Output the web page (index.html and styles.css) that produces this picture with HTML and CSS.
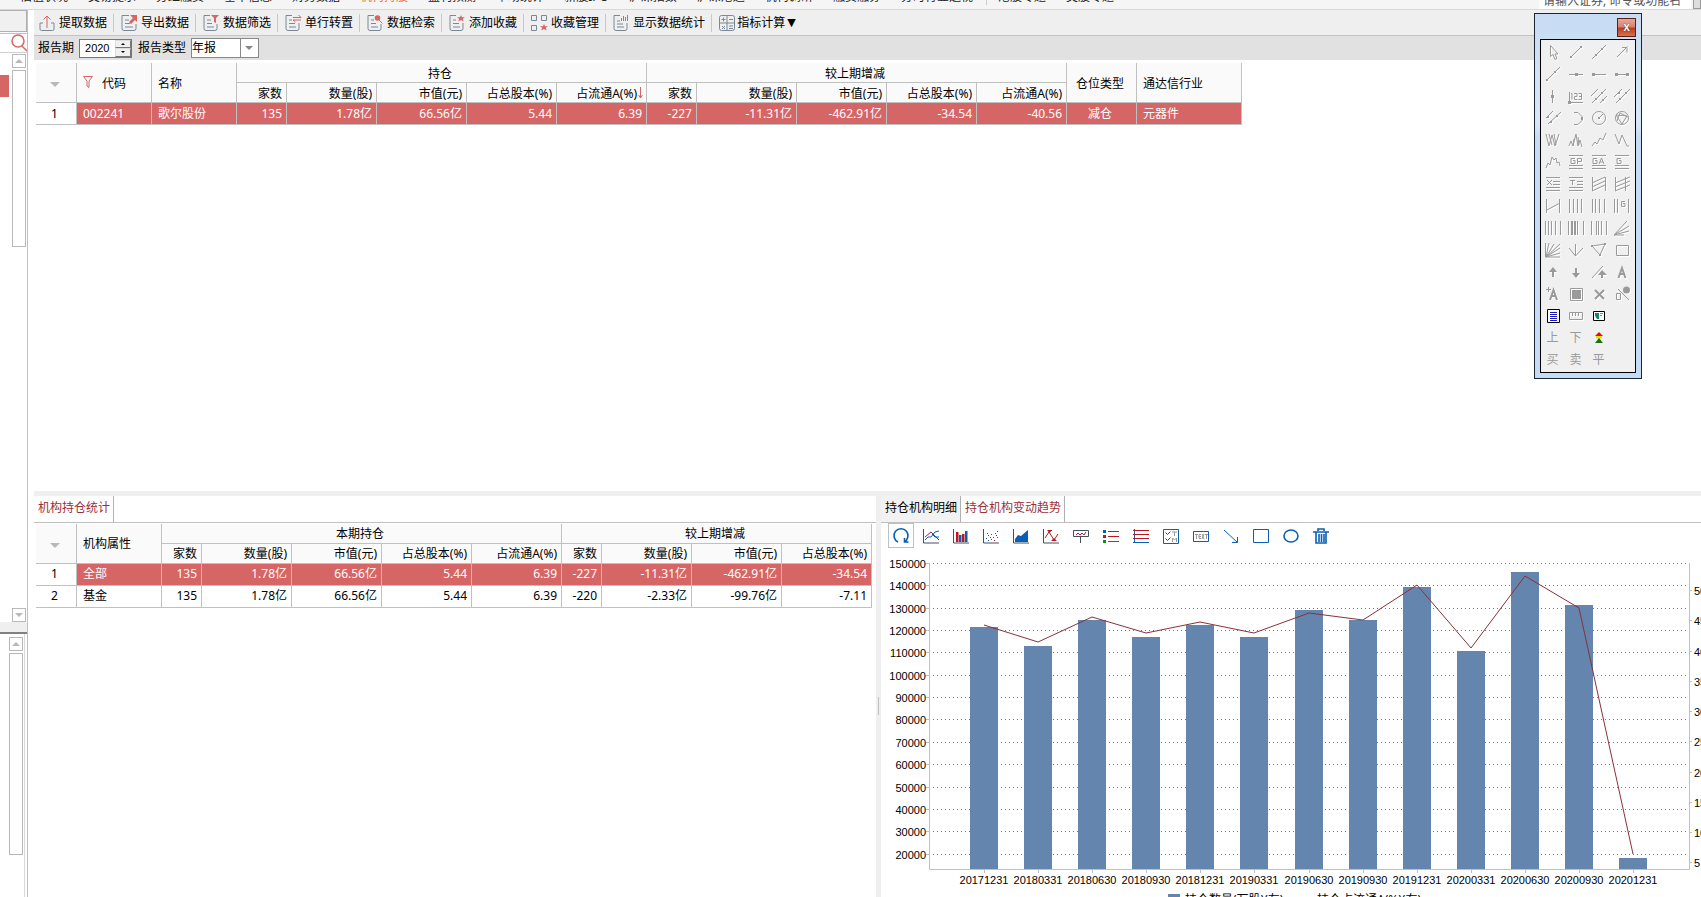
FILE: index.html
```html
<!DOCTYPE html>
<html lang="zh-CN">
<head>
    <meta charset="UTF-8">
    <meta name="viewport" content="width=device-width, initial-scale=1.0">
    <title>机构持股</title>
    <link rel="stylesheet" href="styles.css">
</head>
<body>

<header class="topbar">
    <nav class="topnav">
        <a href="#valuation">估值状况</a>
        <a href="#tips">交易提示</a>
        <a href="#finance">分红融资</a>
        <a href="#basic">基本信息</a>
        <a href="#data">财务数据</a>
        <a href="#holders" class="active">机构持股</a>
        <a href="#forecast">盈利预测</a>
        <a href="#market">市场统计</a>
        <a href="#ipo">新股IPO</a>
        <a href="#hkdata">沪深指数</a>
        <a href="#hkconnect">沪深港通</a>
        <a href="#research">机构调研</a>
        <a href="#margin">融资融券</a>
        <a href="#industry">分时行业透视</a>
        <span class="nav-sep"></span>
        <a href="#hk">港股专题</a>
        <a href="#us">美股专题</a>
    </nav>
    <input class="top-search" type="text" aria-label="搜索" placeholder="请输入证券, 命令或功能名">
    <button class="top-go" aria-label="查找"></button>
</header>

<div class="app">
    <aside class="side">
        <div class="side-head"></div>
        <div class="side-search">
            <svg width="16" height="18" viewBox="0 0 16 18"><circle cx="7" cy="7" r="6"/><path d="M11 12l5 5"/></svg>
        </div>
        <div class="side-list">
            <span class="side-mark"></span>
            <div class="scroll">
                <button class="scroll-btn up" aria-label="向上"></button>
                <div class="thumb"></div>
                <button class="scroll-btn down" aria-label="向下"></button>
            </div>
        </div>
        <div class="side-gap"></div>
        <div class="side-list second">
            <div class="scroll">
                <button class="scroll-btn up" aria-label="向上"></button>
                <div class="thumb tall"></div>
            </div>
        </div>
    </aside>

    <main class="main">
        <div class="toolbar">
            <button><svg class="ti" viewBox="0 0 16 16"><path d="M4 8H1v6q0 1.500 1.500 1.500h11q1.500 0 1.500-1.500V8h-3"/><path class="r" d="M8 13V1M4.500 4.500L8 1l3.500 3.500"/></svg>提取数据</button>
            <button><svg class="ti" viewBox="0 0 16 16"><path d="M8 .5H1v13q0 2 2 2h10q2 0 2-2V9M4 5h4M4 8.500h5M4 12h8"/><path class="rf" d="M9 0h7v7l-2-2-4 4-2-2 4-4z"/></svg>导出数据</button>
            <button><svg class="ti" viewBox="0 0 16 16"><path d="M7 .5H1v13q0 2 2 2h9q2 0 2-2V9M4 5h4M4 8.500h5M4 12h7"/><path class="rf" d="M8 0h8l-3 3v5l-2-1V3z"/></svg>数据筛选</button>
            <button><svg class="ti" viewBox="0 0 16 16"><path d="M7 .5H1v13q0 2 2 2h9q2 0 2-2V8M4 5h3M4 8.500h6M4 12h7"/><path class="r" d="M8 2.500h8M13.500 0L16 2.500M16 5H8l2.500 2"/></svg>单行转置</button>
            <button><svg class="ti" viewBox="0 0 16 16"><path d="M7 .5H1v13q0 2 2 2h9q2 0 2-2V9M4 5h3M4 8.500h5M4 12h7"/><circle class="rf" cx="10.500" cy="3" r="2.800"/><path class="r" d="M12 5l3.500 3.500"/></svg>数据检索</button>
            <button><svg class="ti" viewBox="0 0 16 16"><path d="M7 .5H1v13q0 2 2 2h9q2 0 2-2V8M4 5h3M4 8.500h6M4 12h7"/><path class="rf" d="M12 0l1 2.200h3l-2.200 1.600.9 2.800L12 5 9.300 6.600l.9-2.800L8 2.200h3z"/></svg>添加收藏</button>
            <button><svg class="ti" viewBox="0 0 16 16"><path d="M.5.5h5v5h-5zM10.500.5h5v5h-5zM.5 10.500h5v5h-5z"/><path class="rf" d="M13 9l1 2.200h3l-2.200 1.600.9 2.800L13 14l-2.700 1.600.9-2.800L9 11.200h3z"/></svg>收藏管理</button>
            <button><svg class="ti" viewBox="0 0 16 16"><path d="M7 .5H1v13q0 2 2 2h9q2 0 2-2V8M4 6h3M4 9h6M4 12h7"/><path class="r" d="M8.500 3v3M10.500 1v5M12.500 2v4M14.500 0v6"/></svg>显示数据统计</button>
            <button><svg class="ti" viewBox="0 0 16 16"><rect x=".5" y=".5" width="15" height="15" rx="2"/><path d="M8 1v15M1 8h15M3 11l3 3M6 11l-3 3M10 11h4M10 13.500h4"/><path class="r" d="M2.500 4.500h4M4.500 2.500v4M10 4.500h4"/></svg>指标计算<span class="caret">▼</span></button>
        </div>

        <div class="filters">
            <label for="year">报告期</label>
            <div class="spin">
                <input id="year" type="text" value="2020">
                <div class="spin-btns">
                    <button class="up" aria-label="增加"></button>
                    <button class="down" aria-label="减少"></button>
                </div>
            </div>
            <label for="kind">报告类型</label>
            <div class="combo">
                <select id="kind"><option>年报</option><option>中报</option></select>
            </div>
        </div>

        <section class="top-pane">
            <table class="grid wide">
                <colgroup>
                    <col class="w41"><col class="w75"><col class="w85"><col class="w50"><col class="w90"><col class="w90"><col class="w90"><col class="w90">
                    <col class="w50"><col class="w100"><col class="w90"><col class="w90"><col class="w90"><col class="w70"><col class="w105">
                </colgroup>
                <thead>
                    <tr>
                        <th rowspan="2" class="idx"><i class="tri"></i></th>
                        <th rowspan="2" class="l"><svg class="funnel" viewBox="0 0 10 12"><path d="M.5.5h9L6 5v6.500L4 10V5z"/></svg>代码</th>
                        <th rowspan="2" class="l">名称</th>
                        <th colspan="5" class="c">持仓</th>
                        <th colspan="5" class="c">较上期增减</th>
                        <th rowspan="2" class="c">仓位类型</th>
                        <th rowspan="2" class="l">通达信行业</th>
                    </tr>
                    <tr>
                        <th>家数</th><th>数量(股)</th><th>市值(元)</th><th>占总股本(%)</th>
                        <th class="sorted">占流通A(%)<svg class="sort" viewBox="0 0 5 12"><path d="M2.500 0v11M.5 8l2 3 2-3"/></svg></th>
                        <th>家数</th><th>数量(股)</th><th>市值(元)</th><th>占总股本(%)</th><th>占流通A(%)</th>
                    </tr>
                </thead>
                <tbody>
                    <tr class="sel">
                        <td class="idx">1</td><td class="l">002241</td><td class="l">歌尔股份</td>
                        <td>135</td><td>1.78亿</td><td>66.56亿</td><td>5.44</td><td>6.39</td>
                        <td>-227</td><td>-11.31亿</td><td>-462.91亿</td><td>-34.54</td><td>-40.56</td>
                        <td class="c">减仓</td><td class="l">元器件</td>
                    </tr>
                </tbody>
            </table>
        </section>

        <div class="hsplit"></div>

        <div class="bottom">
            <section class="stat-pane">
                <div class="tabs"><button class="tab on">机构持仓统计</button></div>
                <div class="stat-body">
                    <table class="grid narrow">
                        <colgroup>
                            <col class="w41"><col class="w85"><col class="w40"><col class="w90"><col class="w90"><col class="w90"><col class="w90">
                            <col class="w40"><col class="w90"><col class="w90"><col class="w90">
                        </colgroup>
                        <thead>
                            <tr>
                                <th rowspan="2" class="idx"><i class="tri"></i></th>
                                <th rowspan="2" class="l">机构属性</th>
                                <th colspan="5" class="c">本期持仓</th>
                                <th colspan="4" class="c">较上期增减</th>
                            </tr>
                            <tr>
                                <th>家数</th><th>数量(股)</th><th>市值(元)</th><th>占总股本(%)</th><th>占流通A(%)</th>
                                <th>家数</th><th>数量(股)</th><th>市值(元)</th><th>占总股本(%)</th>
                            </tr>
                        </thead>
                        <tbody>
                            <tr class="sel">
                                <td class="idx">1</td><td class="l">全部</td><td>135</td><td>1.78亿</td><td>66.56亿</td><td>5.44</td><td>6.39</td>
                                <td>-227</td><td>-11.31亿</td><td>-462.91亿</td><td>-34.54</td>
                            </tr>
                            <tr>
                                <td class="idx">2</td><td class="l">基金</td><td>135</td><td>1.78亿</td><td>66.56亿</td><td>5.44</td><td>6.39</td>
                                <td>-220</td><td>-2.33亿</td><td>-99.76亿</td><td>-7.11</td>
                            </tr>
                        </tbody>
                    </table>
                </div>
            </section>

            <div class="vsplit"></div>

            <section class="chart-pane">
                <div class="tabs">
                    <button class="tab off">持仓机构明细</button>
                    <button class="tab on">持仓机构变动趋势</button>
                </div>
                <div class="chart-tools">
                    <button class="boxed" aria-label="刷新"><svg viewBox="0 0 16 16"><path class="b2" d="M5 14A7 7 0 1 1 11 14M11.500 10v4h4"/></svg></button>
                    <button aria-label="折线图"><svg viewBox="0 0 16 16"><path class="k" d="M.5 1v14H16"/><path class="b" d="M2 12l3-3h3l4-5 4-1M9 6l3 3h4"/><path class="r" d="M2 9l6-5 3 3 5 5"/></svg></button>
                    <button aria-label="柱状图"><svg viewBox="0 0 16 16"><path class="k" d="M.5 1v14H16"/><path class="fr" d="M3 4h2.500v10H3zM9 6h2.500v8H9z"/><path class="fb" d="M6 7h2.500v7H6zM12 3h2.500v11H12z"/></svg></button>
                    <button aria-label="散点图"><svg viewBox="0 0 16 16"><path class="k" d="M.5 1v14H16"/><path class="fb" d="M3 10h1v1H3zM5 7h1v1H5zM8 6h1v1H8zM10 9h1v1h-1zM12 5h1v1h-1zM14 3h1v1h-1zM5 12h1v1H5zM14 9h1v1h-1zM8 11h1v1H8z"/><path class="fr" d="M4 5h1v1H4zM7 9h1v1H7zM11 12h1v1h-1zM13 7h1v1h-1z"/></svg></button>
                    <button aria-label="面积图"><svg viewBox="0 0 16 16"><path class="k" d="M.5 1v14H16"/><path class="fb" d="M2 14v-3l3-4 3 1 7-6v12z"/></svg></button>
                    <button aria-label="极值"><svg viewBox="0 0 16 16"><path class="k" d="M.5 1v14H16"/><path class="r" d="M2 10l4-6 5 8 4-6"/><path class="fr" d="M4 2h5L6.500 5zM8 13l3-3 3 3zM5 2h4v1H5z"/></svg></button>
                    <button aria-label="标注"><svg viewBox="0 0 16 16"><path class="k" d="M.5 2.500h15v6H.5zM7.500 9v6"/><path class="r" d="M3 7l2-2 2 2 2-2 2 2 2-3"/></svg></button>
                    <button aria-label="图例"><svg viewBox="0 0 16 16"><path class="fb" d="M0 2h3v3H0z"/><path class="fr" d="M0 7h3v3H0z"/><path class="fg" d="M0 12h3v3H0z"/><path class="b" d="M5 3.500h11"/><path class="r" d="M5 8.500h11"/><path class="g" d="M5 13.500h11"/></svg></button>
                    <button aria-label="横线"><svg viewBox="0 0 16 16"><path class="b" d="M1.500 1v14M0 14.500h16"/><path class="r" d="M0 2.500h16M0 6.500h16M0 10.500h16"/></svg></button>
                    <button aria-label="选项"><svg viewBox="0 0 16 16"><path class="b" d="M.5 1.500h15v14H.5z"/><path class="r" d="M2.500 4.500l2 2 3-3M2.500 10.500l2 2 3-3"/><path class="m" d="M9 4h5M11.500 4v4M9.500 14v-4l2 2 2-2v4"/></svg></button>
                    <button aria-label="文本"><svg viewBox="0 0 16 16"><path class="b" d="M.5 3.500h15v10H.5z"/><path class="m" d="M2 6.500h3M3.500 6v5M8 6.500H6v4h2M6 8.500h2M9 6l2 5M11 6l-2 5M12 6.500h3M13.500 6v5"/></svg></button>
                    <button aria-label="箭头"><svg viewBox="0 0 16 16"><path class="b" d="M1 2l13.500 12.500M14.500 9v5.500H9"/></svg></button>
                    <button aria-label="矩形"><svg viewBox="0 0 16 16"><path class="b" d="M.5 1.500h15v13H.5z"/></svg></button>
                    <button aria-label="圆"><svg viewBox="0 0 16 16"><ellipse class="b2" cx="8" cy="8" rx="7" ry="6"/></svg></button>
                    <button aria-label="删除"><svg viewBox="0 0 16 16"><path class="b2" d="M0 4h16M5 3V1h6v2M3 4v11h10V4"/><path class="b2" d="M6 6v8M8.500 6v8M11 6v8"/></svg></button>
                </div>
                <div class="chart"><svg id="chart" role="img" aria-label="持仓机构变动趋势"></svg></div>
            </section>
        </div>
    </main>
</div>

<!-- floating drawing tools -->
<div class="palette">
    <div class="palette-title"><button class="close" aria-label="关闭">x</button></div>
    <div class="palette-body">
        <button><svg viewBox="0 0 16 16"><path d="M5.500 1.500v11l2.500-2 2 5 2-1-2-4.500h3z"/></svg></button>
        <button><svg viewBox="0 0 16 16"><path d="M3 13L13 3"/><path class="f" d="M2 12h2v2H2zM12 2h2v2h-2z"/></svg></button>
        <button><svg viewBox="0 0 16 16"><path d="M1 15L15 1"/><path class="f" d="M4 10h2v2H4zM10 4h2v2h-2z"/></svg></button>
        <button><svg viewBox="0 0 16 16"><path d="M3 13L13.500 2.500M8 3.500h5v5"/></svg></button>

        <button><svg viewBox="0 0 16 16"><path d="M1 15L15 1"/><path class="f" d="M1 13h2v2H1zM9 5h2v2H9z"/></svg></button>
        <button><svg viewBox="0 0 16 16"><path d="M1 8.500h14"/><path class="f" d="M7 7h3v3H7z"/></svg></button>
        <button><svg viewBox="0 0 16 16"><path d="M1 8.500h14"/><path class="f" d="M1 7h3v3H1z"/></svg></button>
        <button><svg viewBox="0 0 16 16"><path d="M2 8.500h12"/><path class="f" d="M1 7h3v3H1zM12 7h3v3h-3z"/></svg></button>

        <button><svg viewBox="0 0 16 16"><path d="M7.500 2v13"/><path class="f" d="M6 7h3v3H6z"/></svg></button>
        <button><svg viewBox="0 0 16 16"><path d="M1.500 4v10M1 14.500h14M3 5.500h1v6M6 5.500h3v3H6.500v3H9.500M10.500 5.500h3v6h-3M11 8.500h2"/><path class="f" d="M0 13h3v3H0z"/></svg></button>
        <button><svg viewBox="0 0 16 16"><path d="M0 8l7-7M1 15L15 1M9 15l7-7"/><path class="f" d="M10 4h2v2h-2zM4 10h2v2H4zM11 11h2v2h-2z"/></svg></button>
        <button><svg viewBox="0 0 16 16"><path d="M0 9l8-8M2 15L16 1"/><path class="f" d="M4 4h2v2H4zM11 4h2v2h-2zM5 10h2v2H5z"/></svg></button>

        <button><svg viewBox="0 0 16 16"><path d="M1 8l7-7M3 14L16 2"/><path class="f" d="M2 6h2v2H2zM5 11h2v2H5zM11 5h2v2h-2z"/></svg></button>
        <button><svg viewBox="0 0 16 16"><path d="M6 2.500h4l4 4v4l-4 4H6"/><path class="f" d="M13 7h2v3h-2z"/></svg></button>
        <button><svg viewBox="0 0 16 16"><circle cx="8" cy="8" r="6.500"/><path d="M8 8l4-4"/><path class="f" d="M7 7h2v2H7z"/></svg></button>
        <button><svg viewBox="0 0 16 16"><circle cx="8" cy="8" r="6.500"/><path d="M2 5l11 1-5 8zM3 11l3-8 8 4"/></svg></button>

        <button><svg viewBox="0 0 16 16"><path d="M1 2l3 12L7 3l3 11 4-12M4 2l3 11M9 2l2 11"/></svg></button>
        <button><svg viewBox="0 0 16 16"><path d="M1 14l2-5 2 5 3-12 2 12 2-6 2 7M5 14l1-7M10 5l1 8"/></svg></button>
        <button><svg viewBox="0 0 16 16"><path d="M1 14l3-4 2 2 3-6 3 2 3-7"/></svg></button>
        <button><svg viewBox="0 0 16 16"><path d="M1 2l4 10 3-9 5 11h2"/></svg></button>

        <button><svg viewBox="0 0 16 16"><path d="M1 14l2-5 2 2 2-8 2 3 2-2 1 5 2-1 1 4"/></svg></button>
        <button><svg viewBox="0 0 16 16"><path d="M1 1.500h14M1 11.500h14M1 14.500h14M7 4.500H3v5h4v-3H5M9.500 10V4.500h4v3h-4"/></svg></button>
        <button><svg viewBox="0 0 16 16"><path d="M1 1.500h14M1 11.500h14M1 14.500h14M6 4.500H2v5h4v-3H4M8 10l2.500-6L13 10M9 8h3"/></svg></button>
        <button><svg viewBox="0 0 16 16"><path d="M1 1.500h14M1 11.500h14M1 14.500h14M7 4.500H3v5h4v-3H5"/></svg></button>

        <button><svg viewBox="0 0 16 16"><path d="M1 1.500h14M8 5.500h7M8 8.500h7M1 11.500h14M1 14.500h14M2 9l5-5M2 4l2 2M5 7l2 2"/></svg></button>
        <button><svg viewBox="0 0 16 16"><path d="M1 1.500h14M9 5.500h6M9 8.500h6M1 11.500h14M1 14.500h14M2 4.500h5M4.500 4v5"/></svg></button>
        <button><svg viewBox="0 0 16 16"><path d="M1.500 1v14M14.500 1v14M1 7l13-6M1 11l13-6M1 15l13-6"/></svg></button>
        <button><svg viewBox="0 0 16 16"><path d="M1.500 1v14M11.500 1v14M1 7l15-6M1 11l15-6M1 15l15-6"/></svg></button>

        <button><svg viewBox="0 0 16 16"><path d="M1.500 1v14M14.500 1v14M2 12l13-7"/></svg></button>
        <button><svg viewBox="0 0 16 16"><path d="M1.500 1v14M5.500 1v14M9.500 1v14M13.500 1v14"/></svg></button>
        <button><svg viewBox="0 0 16 16"><path d="M1.500 1v14M4.500 1v14M8.500 1v14M13.500 1v14"/></svg></button>
        <button><svg viewBox="0 0 16 16"><path d="M.5 1v14M3.500 1v14M14.500 1v14M11 3.500H7.500v5H11v-3H9"/></svg></button>

        <button><svg viewBox="0 0 16 16"><path d="M.5 1v14M3.500 1v14M6.500 1v14M10.500 1v14M15.500 1v14"/></svg></button>
        <button><svg viewBox="0 0 16 16"><path d="M.5 1v14M9.500 1v14M15.500 1v14"/><path class="f" d="M3 1h2v14H3zM6 1h2v14H6z"/></svg></button>
        <button><svg viewBox="0 0 16 16"><path d="M.5 1v14M5.500 1v14M7.500 1v14M10.500 1v14M15.500 1v14"/></svg></button>
        <button><svg viewBox="0 0 16 16"><path d="M0 15L13 1M0 15L15 6M0 15l15-4M0 15h10"/></svg></button>

        <button><svg viewBox="0 0 16 16"><path d="M.5 1v14H15M1 15L4 1M1 15L9 2M1 15L15 2M1 15l14-9M1 15l14-4"/></svg></button>
        <button><svg viewBox="0 0 16 16"><path d="M7.500 2v12M1 6l6.500 8L15 6"/></svg></button>
        <button><svg viewBox="0 0 16 16"><path d="M1 4l13-2-5 11z"/><path class="f" d="M0 3h2v2H0zM13 1h2v2h-2zM8 12h2v2H8z"/></svg></button>
        <button><svg viewBox="0 0 16 16"><path d="M2.500 3.500h12v10h-12z"/></svg></button>

        <button><svg viewBox="0 0 16 16"><path class="f" d="M8 3l4 5H9v5H7V8H4z"/></svg></button>
        <button><svg viewBox="0 0 16 16"><path class="f" d="M8 14l4-5H9V4H7v5H4z"/></svg></button>
        <button><svg viewBox="0 0 16 16"><path d="M1 14L12 2"/><path class="f" d="M11 6l5 5h-4v3h-2v-3H7z"/></svg></button>
        <button><svg viewBox="0 0 16 16"><path class="s2" d="M4.500 14l3.500-10 3.500 10M5 10h6"/></svg></button>

        <button><svg viewBox="0 0 16 16"><path class="s2" d="M5 14l3.500-10L12 14M6 10h5"/><path d="M1 3.500h5M3.500 1v5"/></svg></button>
        <button><svg viewBox="0 0 16 16"><path d="M2.500 2.500h12v12h-12z"/><path class="f" d="M4 4h9v9H4z"/></svg></button>
        <button><svg viewBox="0 0 16 16"><path class="s2" d="M4 4l9 9M13 4l-9 9"/></svg></button>
        <button><svg viewBox="0 0 16 16"><path d="M2.500 7.500h4v6h-4zM4 3l11 11"/><circle class="f" cx="12.500" cy="4" r="3.500"/></svg></button>

        <button><svg class="raw" viewBox="0 0 16 16"><path fill="#fff" stroke="#000" d="M2.500 1.500h12v13h-12z"/><path stroke="#1818c0" d="M5 4.500h7M5 6.500h7M5 8.500h7M5 10.500h7M5 12.500h7"/></svg></button>
        <button><svg viewBox="0 0 16 16"><path d="M1.500 4.500h13v7h-13zM4.500 5v3M7.500 5v3M10.500 5v3"/></svg></button>
        <button><svg class="raw" viewBox="0 0 16 16"><path fill="#fff" stroke="#000" d="M2.500 3.500h11v9h-11z"/><path fill="#16856a" d="M4 5h4v6H6L4 8z"/><path stroke="#888" d="M9 5.500h3M9 7.500h2"/></svg></button>
        <span></span>

        <button class="word">上</button>
        <button class="word">下</button>
        <button><svg class="raw" viewBox="0 0 16 16"><path fill="#e01010" d="M8 2l4 4H4z"/><path fill="#f0e000" d="M5 6h6v2l-3 1-3-1z"/><path fill="#187018" d="M8 8l4 5H4z"/></svg></button>
        <span></span>

        <button class="word">买</button>
        <button class="word">卖</button>
        <button class="word">平</button>
    </div>
</div>

<script src="script.js"></script>
</body>
</html>
```
FILE: styles.css
```css
* {
    box-sizing: border-box;
}
body {
    margin: 0;
    height: 100vh;
    display: flex;
    flex-direction: column;
    overflow: hidden;
    background-color: #fff;
    color: #000;
    font-family: "Noto Sans", "Noto Sans CJK SC", sans-serif;
    font-size: 12px;
    line-height: 16px;
}
button, input, select {
    font: inherit;
    color: inherit;
    margin: 0;
    padding: 0;
    border: 0;
    border-radius: 0;
    background: none;
}
svg {
    display: block;
    fill: none;
}

/* top menu, scrolled so only its lower edge shows */
.topbar {
    display: flex;
    align-items: flex-end;
    flex: none;
    height: 10px;
    overflow: hidden;
    background-color: #f5f5f5;
    border-bottom: 1px solid #d8d8d8;
}
.topnav {
    display: flex;
    flex: 1;
    gap: 20px;
    padding: 0 0 4px 20px;
}
.topnav a {
    color: #222;
    text-decoration: none;
    white-space: nowrap;
}
.topnav a.active {
    color: #f07040;
}
.nav-sep {
    width: 1px;
    margin: 0 -9px 0 -7px;
    background-color: #ccc;
}
.top-search {
    width: 152px;
    height: 18px;
    margin-right: 2px;
    padding-left: 4px;
    background-color: #fff;
}
.top-search::placeholder {
    color: #555;
}
.top-go {
    width: 8px;
    height: 20px;
    background-color: #ddd;
    border: 1px solid #999;
}

.app {
    display: flex;
    flex: 1;
    min-height: 0;
}

/* left strip */
.side {
    display: flex;
    flex-direction: column;
    flex: none;
    width: 28px;
    border-right: 1px solid #c0c0c0;
}
.side-head {
    height: 22px;
    background-color: #f0f0f0;
    border: 1px solid #b0b0b0;
    border-left: 0;
}
.side-search {
    display: flex;
    justify-content: flex-end;
    height: 20px;
    margin-top: 1px;
    border-top: 1px solid #c0c0c0;
    border-bottom: 1px solid #d0d0d0;
}
.side-search svg {
    stroke: #d66566;
    stroke-width: 1.5;
}
.side-list {
    display: flex;
    justify-content: space-between;
    flex: 569;
    padding: 1px 1px 0 0;
}
.side-mark {
    width: 9px;
    height: 22px;
    margin-top: 21px;
    background-color: #d66566;
}
.scroll {
    display: flex;
    flex-direction: column;
    width: 14px;
}
.scroll-btn {
    display: flex;
    align-items: center;
    justify-content: center;
    height: 14px;
    border: 1px solid #b8b8b8;
}
.scroll-btn::before, .tri::before {
    content: "";
    border: 4px solid transparent;
}
.scroll-btn.up::before {
    border-top: 0;
    border-bottom-color: #b8b8b8;
}
.scroll-btn.down {
    margin-top: auto;
}
.scroll-btn.down::before {
    border-bottom: 0;
    border-top-color: #b8b8b8;
}
.thumb {
    height: 177px;
    margin-top: 2px;
    border: 1px solid #b8b8b8;
}
.thumb.tall {
    height: 202px;
}
.side-gap {
    height: 12px;
    background-color: #efefef;
    border-bottom: 2px solid #808080;
}
.side-list.second {
    flex: 261;
    justify-content: flex-end;
    margin-right: 2px;
    padding: 3px 1px 0 0;
    border-right: 1px solid #d8d8d8;
}

.main {
    display: flex;
    flex-direction: column;
    flex: 1;
    min-width: 0;
    margin-left: 6px;
}
.toolbar {
    display: flex;
    align-items: center;
    flex: none;
    height: 26px;
    background-color: #efefef;
    border-bottom: 1px solid #c4c4c4;
}
.toolbar button {
    display: flex;
    align-items: center;
    gap: 4px;
    height: 18px;
    padding: 0 6px 0 7px;
    border-right: 1px solid #c8c8c8;
    white-space: nowrap;
}
.toolbar button:first-child {
    padding-left: 5px;
}
.toolbar button:last-child {
    gap: 2px;
    border-right: 0;
}
.caret {
    font-family: "DejaVu Sans", sans-serif;
    font-size: 11px;
}
.ti {
    width: 16px;
    height: 16px;
    stroke: #788898;
    overflow: visible;
}
.r {
    stroke: #d66566;
}
.rf {
    fill: #d66566;
    stroke: none;
}

.filters {
    display: flex;
    align-items: center;
    flex: none;
    gap: 6px;
    height: 24px;
    padding-left: 4px;
    background-color: #e1e1e1;
}
.spin {
    display: flex;
    width: 53px;
    height: 19px;
    margin-left: -1px;
    background-color: #fff;
    border: 1px solid #777;
}
.spin input {
    flex: 1;
    min-width: 0;
    padding-left: 5px;
    font-family: "Liberation Sans", sans-serif;
    font-size: 11px;
}
.spin-btns {
    display: flex;
    flex-direction: column;
    width: 16px;
}
.spin-btns button {
    display: flex;
    align-items: center;
    justify-content: center;
    flex: 1;
    background-color: #f0f0f0;
    border: 1px solid #777;
    border-top-color: #ddd;
    border-left-color: #ddd;
}
.spin-btns button::before {
    content: "";
    border: 2px solid transparent;
}
.spin-btns .up::before {
    border-top: 0;
    border-bottom-color: #000;
}
.spin-btns .down::before {
    border-bottom: 0;
    border-top-color: #000;
}
.combo {
    position: relative;
    width: 68px;
    height: 20px;
    margin-left: -1px;
    background-color: #fff;
    border: 1px solid #888;
}
.combo select {
    width: 100%;
    height: 18px;
    padding: 0 20px 0 0;
    appearance: none;
}
.combo::before {
    content: "";
    position: absolute;
    top: 0;
    bottom: 0;
    right: 17px;
    width: 1px;
    background-color: #888;
}
.combo::after {
    content: "";
    position: absolute;
    top: 7px;
    right: 5px;
    border: 4px solid transparent;
    border-top-color: #888;
    border-bottom: 0;
    pointer-events: none;
}

/* tables */
.grid {
    table-layout: fixed;
    border-spacing: 0;
}
.wide {
    width: 1206px;
}
.narrow {
    width: 836px;
}
.w40 { width: 40px; }
.w41 { width: 41px; }
.w50 { width: 50px; }
.w70 { width: 70px; }
.w75 { width: 75px; }
.w85 { width: 85px; }
.w90 { width: 90px; }
.w100 { width: 100px; }
.w105 { width: 105px; }
.grid th, .grid td {
    padding: 0 4px;
    border-right: 1px solid #c0c0c0;
    border-bottom: 1px solid #c0c0c0;
    text-align: right;
    font-weight: normal;
    white-space: nowrap;
}
.grid th {
    height: 20px;
    padding-top: 2px;
    background-color: #fafafa;
}
.grid td {
    height: 22px;
}
.grid .l {
    padding-left: 6px;
    text-align: left;
}
.grid .c, .grid .idx {
    padding-right: 7px;
    text-align: center;
}
.grid .sel td {
    background-color: #d66566;
    color: #fff;
}
.grid .sel .idx {
    background-color: #fff;
    color: #000;
}
.tri::before {
    display: inline-block;
    border-width: 5px;
    border-top-color: #b8b8b8;
    border-bottom: 0;
    vertical-align: middle;
}
.funnel {
    display: inline-block;
    width: 10px;
    height: 12px;
    margin-right: 9px;
    stroke: #d66566;
}
.grid .sorted {
    padding-right: 3px;
}
.sort {
    display: inline-block;
    width: 5px;
    height: 12px;
    margin-left: 1px;
    stroke: #d66566;
    vertical-align: -1px;
}

.top-pane {
    flex: 430;
    min-height: 0;
    padding: 3px 0 0 2px;
}
.hsplit {
    flex: none;
    height: 5px;
    background-color: #efefef;
}
.bottom {
    display: flex;
    flex: 403;
    min-height: 0;
}
.stat-pane {
    flex: 842;
    min-width: 0;
}
.stat-body {
    padding: 1px 0 0 2px;
}
.vsplit {
    display: flex;
    align-items: center;
    justify-content: center;
    width: 5px;
    padding-top: 20px;
    background-color: #efefef;
}
.vsplit::before {
    content: "";
    width: 1px;
    height: 18px;
    background-color: #c0c0c0;
}
.tabs {
    display: flex;
    flex: none;
    height: 27px;
    border-bottom: 1px solid #c0c0c0;
}
.tab {
    padding: 0 3px 2px 4px;
    border-right: 1px solid #b0b0b0;
    white-space: nowrap;
}
.tab.on {
    color: #9c2f38;
}
.tab.off {
    background-color: #f2f2f2;
}

.chart-pane {
    display: flex;
    flex-direction: column;
    flex: 820;
    min-width: 0;
}
.chart-tools {
    display: flex;
    align-items: center;
    gap: 4px;
    flex: none;
    height: 26px;
    padding-left: 7px;
}
.chart-tools button {
    display: flex;
    align-items: center;
    justify-content: center;
    width: 26px;
    height: 25px;
    border: 1px solid transparent;
}
.chart-tools .boxed {
    border-color: #c0c0c0;
}
.chart-tools svg {
    width: 16px;
    height: 16px;
    overflow: visible;
}
.chart-tools .k { stroke: #405060; }
.chart-tools .b { stroke: #0a5fb4; }
.chart-tools .b2 { stroke: #0a5fb4; stroke-width: 1.6; }
.chart-tools .r { stroke: #b81820; }
.chart-tools .g { stroke: #108a18; }
.chart-tools .m { stroke: #999; }
.chart-tools .fb { fill: #0a5fb4; }
.chart-tools .fr { fill: #b81820; }
.chart-tools .fg { fill: #108a18; }
.chart {
    flex: 1;
    min-height: 0;
    overflow: hidden;
}
.chart svg {
    width: 100%;
    height: 100%;
}
.chart text {
    fill: #000;
    font-family: "Liberation Sans", sans-serif;
    font-size: 11px;
}
.chart .legend {
    font-family: "Noto Sans", "Noto Sans CJK SC", sans-serif;
    font-size: 12px;
}
.chart .end { text-anchor: end; }
.chart .mid { text-anchor: middle; }
.chart .axis {
    stroke: #c0c0c0;
}
.chart .gridline {
    stroke: #777;
    stroke-dasharray: 1 3;
}
.chart .bar {
    fill: #6485ae;
}
.chart .trend {
    stroke: #8a3038;
}

/* drawing palette */
.palette {
    position: absolute;
    top: 13px;
    right: 59px;
    width: 108px;
    padding: 0 5px 5px;
    background-color: #c4dcf6;
    background-image: linear-gradient(#c6dcf2, #d8e8fa 30%, #c4dcf6 34%);
    border: 1px solid #1c2630;
}
.palette-title {
    display: flex;
    justify-content: flex-end;
    height: 25px;
    padding-top: 4px;
}
.close {
    width: 19px;
    height: 19px;
    color: #fff;
    font-family: "Liberation Sans", sans-serif;
    font-weight: bold;
    line-height: 15px;
    text-shadow: 0 0 1px #000;
    background-image: linear-gradient(#e8a898, #d88070 48%, #b83c20 52%, #d87050);
    border: 1px solid #5c2018;
}
.palette-body {
    display: grid;
    grid-template-columns: repeat(4, 1fr);
    grid-auto-rows: 22px;
    padding: 1px 2px 1px 0;
    background-color: #f0f0f0;
    border: 1px solid #000;
}
.palette-body button {
    display: flex;
    align-items: center;
    justify-content: center;
}
.palette-body svg {
    width: 16px;
    height: 16px;
    stroke: #9a9a9a;
    filter: drop-shadow(1px 1px 0 #fff);
}
.palette-body .f {
    fill: #9a9a9a;
    stroke: none;
}
.palette-body .s2 {
    stroke-width: 2;
}
.palette-body .raw {
    stroke: none;
    filter: none;
}
.word {
    color: #9a9a9a;
}
```
FILE: script.js
```javascript
const rows = [
    ['20171231', 121190, 44.3],
    ['20180331', 112700, 41.4],
    ['20180630', 124310, 45.5],
    ['20180930', 116720, 42.9],
    ['20181231', 122080, 44.7],
    ['20190331', 116720, 42.9],
    ['20190630', 128780, 46.3],
    ['20190930', 124310, 45.0],
    ['20191231', 139050, 50.8],
    ['20200331', 110460, 40.5],
    ['20200630', 145760, 52.3],
    ['20200930', 131010, 47.1],
    ['20201231', 17990, 6.4]
];

function drawChart() {
    const svg = document.getElementById('chart');
    const w = svg.parentElement.clientWidth;
    const h = svg.parentElement.clientHeight;
    const left = 48, right = w - 12, top = 14, bottom = h - 28;
    const base = 13100;
    const yBar = v => Math.round(bottom - (v - base) / (150000 - base) * (bottom - top));
    // right axis: 3.9% sits on the baseline, 54.5% at the top
    const yPct = v => Math.round(bottom - (v - 3.9) / 50.6 * (bottom - top));
    const step = (right - left - 3) / 14;
    let out = '';

    for (let v = 20000; v <= 150000; v += 10000) {
        const y = yBar(v) + 0.5;
        out += `<line class="gridline" x1="${left}" y1="${y}" x2="${right}" y2="${y}"/>`;
        out += `<line class="axis" x1="${left - 3}" y1="${y}" x2="${left}" y2="${y}"/>`;
        out += `<text class="end" x="${left - 3}" y="${y + 4}">${v}</text>`;
    }
    for (let v = 5; v <= 50; v += 5) {
        const y = yPct(v) + 0.5;
        out += `<line class="axis" x1="${right}" y1="${y}" x2="${right + 3}" y2="${y}"/>`;
        out += `<text x="${right + 5}" y="${y + 4}">${v}</text>`;
    }
    const points = [];
    rows.forEach((row, i) => {
        const x = Math.round(left + 1 + step * (i + 1));
        const y = yBar(row[1]);
        out += `<rect class="bar" x="${x - 14}" y="${y}" width="28" height="${bottom - y}"/>`;
        out += `<line class="axis" x1="${x + 0.5}" y1="${bottom}" x2="${x + 0.5}" y2="${bottom + 4}"/>`;
        out += `<text class="mid" x="${x}" y="${bottom + 15}">${row[0]}</text>`;
        points.push(`${x},${yPct(row[2])}`);
    });
    out += `<path class="axis" d="M${left + 0.5} ${top}V${bottom + 0.5}H${right + 0.5}V${top}"/>`;
    out += `<polyline class="trend" points="${points.join(' ')}"/>`;
    out += `<rect class="bar" x="${Math.round(w * 0.35)}" y="${h - 3}" width="12" height="12"/>`;
    out += `<text class="legend" x="${w * 0.35 + 17}" y="${h + 7}">持仓数量(万股)(左)</text>`;
    out += `<text class="legend" x="${w * 0.35 + 149}" y="${h + 7}">持仓占流通A(%)(右)</text>`;
    svg.innerHTML = out;
}

drawChart();
window.addEventListener('resize', drawChart);
```
